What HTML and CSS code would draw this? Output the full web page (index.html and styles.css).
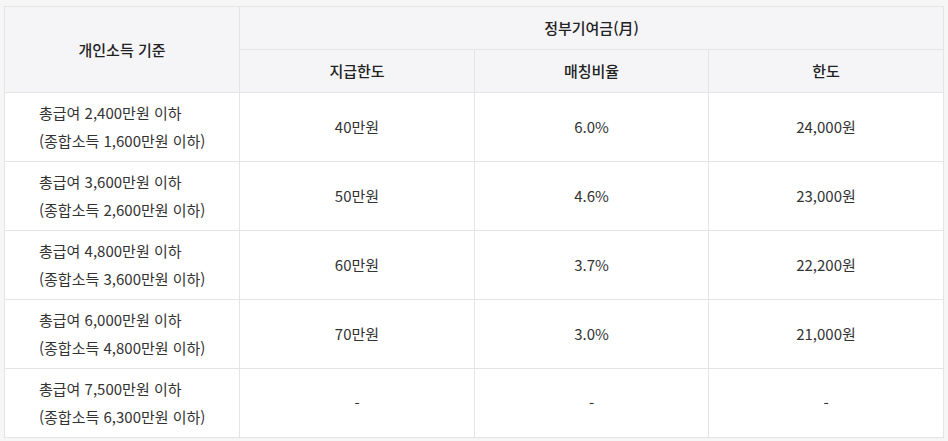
FILE: index.html
```html
<!DOCTYPE html>
<html lang="ko">
<head>
<meta charset="utf-8">
<link rel="stylesheet" href="styles.css">
</head>
<body>
<div class="wrap">
<table class="grid">
  <colgroup>
    <col class="c1"><col class="c2"><col class="c3"><col class="c4">
  </colgroup>
  <thead>
    <tr>
      <th rowspan="2" class="hd">개인소득 기준</th>
      <th colspan="3" class="hd">정부기여금(月)</th>
    </tr>
    <tr>
      <th class="hd">지급한도</th>
      <th class="hd">매칭비율</th>
      <th class="hd">한도</th>
    </tr>
  </thead>
  <tbody>
    <tr>
      <td class="lbl">총급여 2,400만원 이하<br>(종합소득 1,600만원 이하)</td>
      <td>40만원</td><td>6.0%</td><td>24,000원</td>
    </tr>
    <tr>
      <td class="lbl">총급여 3,600만원 이하<br>(종합소득 2,600만원 이하)</td>
      <td>50만원</td><td>4.6%</td><td>23,000원</td>
    </tr>
    <tr>
      <td class="lbl">총급여 4,800만원 이하<br>(종합소득 3,600만원 이하)</td>
      <td>60만원</td><td>3.7%</td><td>22,200원</td>
    </tr>
    <tr>
      <td class="lbl">총급여 6,000만원 이하<br>(종합소득 4,800만원 이하)</td>
      <td>70만원</td><td>3.0%</td><td>21,000원</td>
    </tr>
    <tr>
      <td class="lbl">총급여 7,500만원 이하<br>(종합소득 6,300만원 이하)</td>
      <td>-</td><td>-</td><td>-</td>
    </tr>
  </tbody>
</table>
</div>
</body>
</html>
```
FILE: styles.css
```css
html, body {
  margin: 0;
  padding: 0;
  background: #f6f6f7;
}
body {
  font-family: "Noto Sans CJK KR", "Noto Sans", sans-serif;
  font-size: 15px;
  color: #333;
}
.wrap {
  padding: 6px 5px 0 4px;
}
.grid {
  width: 939px;
  border-collapse: collapse;
  table-layout: fixed;
  background: #fff;
}
.c1 { width: 235px; }
.c2 { width: 235px; }
.c3 { width: 234px; }
.c4 { width: 235px; }
.grid th, .grid td {
  border: 1px solid #e4e4e6;
  text-align: center;
  vertical-align: middle;
  padding: 0;
}
.grid th.hd {
  background: #f5f5f8;
  font-weight: 500;
  color: #222;
  height: 42px;
  line-height: 20px;
}
.grid td {
  height: 68px;
  line-height: 28px;
}
.grid td.lbl {
  text-align: left;
  padding-left: 34px;
}
```
